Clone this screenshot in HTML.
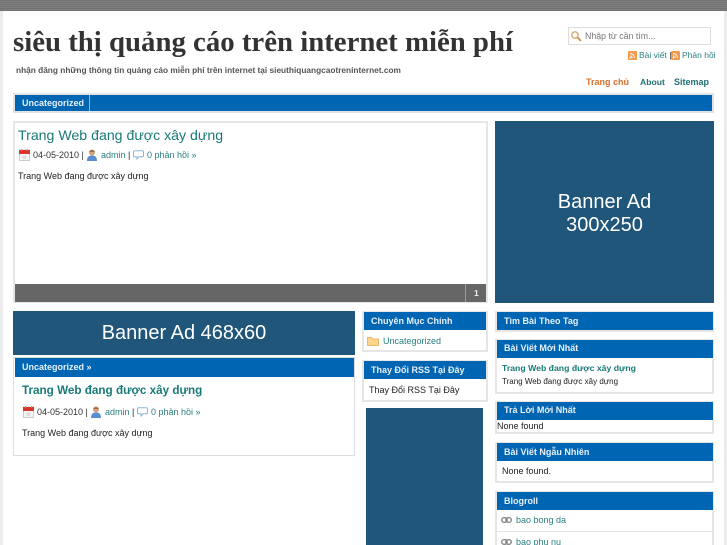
<!DOCTYPE html>
<html><head><meta charset="utf-8">
<style>
html,body{margin:0;padding:0;overflow:hidden}
body{width:727px;height:545px;position:relative;background:#fff;font-family:"Liberation Sans","Noto Sans CJK SC",sans-serif;font-size:9px;color:#222}
#w{position:absolute;left:0;top:0;width:727px;height:545px;overflow:hidden;background:#fff;filter:blur(.35px)}
.a{position:absolute;white-space:nowrap}
.box{position:absolute;box-sizing:border-box;border:2px solid #e6e6e6;background:#fff}
.hd{position:absolute;background:#0066b3;color:#e8f0f8;font-weight:bold;font-size:9px;line-height:18px;padding-left:7px;box-sizing:border-box;white-space:nowrap}
.banner{position:absolute;background:#20567a;color:#fff;text-align:center;font-size:20px}
.l{color:#2a7f80}
svg{position:absolute}
</style></head><body><div id="w">
<div class="a" style="left:0;top:0;width:727px;height:11px;background:repeating-linear-gradient(#727272 0 1px,#808080 1px 2px)"></div>
<div class="a" style="left:0;top:11px;width:3px;height:534px;background:#ececec"></div>
<div class="a" style="left:724px;top:11px;width:3px;height:534px;background:#ececec"></div>

<div class="a" style="left:13px;top:23px;font:bold 28.8px/38px 'Liberation Serif','Noto Serif CJK SC',serif;color:#333">siêu thị quảng cáo trên internet miễn phí</div>
<div class="a" style="left:16px;top:64px;font-size:8.3px;line-height:12px;font-weight:bold;color:#555">nhận đăng những thông tin quảng cáo miễn phí trên internet tại sieuthiquangcaotreninternet.com</div>

<div class="box" style="left:568px;top:27px;width:143px;height:18px;border:1px solid #ddd"></div>
<svg style="left:570px;top:30px" width="12" height="12" viewBox="0 0 12 12"><circle cx="5" cy="5" r="3.2" fill="#fff" stroke="#d9a772" stroke-width="1.4"/><path d="M7.5 7.5L11 11" stroke="#d08a45" stroke-width="1.8"/></svg>
<div class="a" style="left:585px;top:30px;font-size:8.8px;line-height:12px;color:#777">Nhập từ cần tìm...</div>

<svg style="left:628px;top:51px" width="9" height="9" viewBox="0 0 9 9"><rect width="9" height="9" rx="1" fill="#f59a4c"/><path d="M2 2.500A4.500 4.500 0 0 1 6.500 7M2 4.800A2.200 2.200 0 0 1 4.200 7" fill="none" stroke="#fff" stroke-width=".9"/><circle cx="2.400" cy="6.700" r=".8" fill="#fff"/></svg>
<div class="a l" style="left:639px;top:49px;font-size:8.5px;line-height:12px">Bài viết <span style="color:#333">|</span></div>
<svg style="left:671px;top:51px" width="9" height="9" viewBox="0 0 9 9"><rect width="9" height="9" rx="1" fill="#f59a4c"/><path d="M2 2.500A4.500 4.500 0 0 1 6.500 7M2 4.800A2.200 2.200 0 0 1 4.200 7" fill="none" stroke="#fff" stroke-width=".9"/><circle cx="2.400" cy="6.700" r=".8" fill="#fff"/></svg>
<div class="a l" style="left:682px;top:49px;font-size:8.5px;line-height:12px">Phản hồi</div>

<div class="a" style="left:586px;top:76px;font-size:9px;line-height:12px;font-weight:bold;color:#d9702a">Trang chủ</div>
<div class="a" style="left:640px;top:76px;font-size:8.600px;line-height:12px;font-weight:bold;color:#1f6f73">About</div>
<div class="a" style="left:674px;top:76px;font-size:9px;line-height:12px;font-weight:bold;color:#1f6f73">Sitemap</div>

<div class="a" style="left:13px;top:93px;width:701px;height:20px;box-sizing:border-box;border:2px solid #dfe3e6;background:#0066b3"></div>
<div class="a" style="left:22px;top:97px;font-size:9px;line-height:12px;font-weight:bold;color:#e8f0f8">Uncategorized</div>
<div class="a" style="left:89px;top:95px;width:1px;height:16px;background:#8fb8d8"></div>

<div class="box" style="left:13px;top:121px;width:475px;height:182px"></div>
<div class="a" style="left:18px;top:125px;font-size:14.15px;line-height:20px;color:#187a78">Trang Web đang được xây dựng</div>
<svg style="left:19px;top:149px" width="11" height="12" viewBox="0 0 11 12"><rect x=".5" y="1" width="10" height="10.500" fill="#f4f4f4" stroke="#ccc"/><rect x="0" y="1" width="11" height="4" fill="#d8362a"/><path d="M2.500 0v2M8.500 0v2" stroke="#999"/><rect x="3.500" y="6.500" width="4" height="3.500" fill="#ddd"/></svg>
<div class="a" style="left:33px;top:149px;font-size:9px;line-height:12px;color:#333">04-05-2010 |</div>
<svg style="left:86px;top:149px" width="12" height="12" viewBox="0 0 12 12"><circle cx="6" cy="3.500" r="3" fill="#d9a27a"/><path d="M3.200 3A3 3 0 0 1 8.800 3Z" fill="#9a6a45"/><path d="M1 12C1 7.500 3 6.500 6 6.500S11 7.500 11 12Z" fill="#5a8fd0"/></svg>
<div class="a" style="left:101px;top:149px;font-size:9px;line-height:12px"><span class="l">admin</span> |</div>
<svg style="left:133px;top:150px" width="11" height="10" viewBox="0 0 11 10"><path d="M1.500.8h8a1 1 0 0 1 1 1v4a1 1 0 0 1-1 1H6L4 9V6.800H1.500a1 1 0 0 1-1-1v-4a1 1 0 0 1 1-1Z" fill="#fff" stroke="#8ab4dc"/></svg>
<div class="a l" style="left:147px;top:149px;font-size:9px;line-height:12px">0 phản hồi »</div>
<div class="a" style="left:18px;top:170px;font-size:9px;line-height:12px;color:#222">Trang Web đang được xây dựng</div>
<div class="a" style="left:15px;top:284px;width:471px;height:18px;background:#666"></div>
<div class="a" style="left:465px;top:284px;width:1px;height:18px;background:#999"></div>
<div class="a" style="left:474px;top:287px;font-size:8.500px;line-height:12px;font-weight:bold;color:#eee">1</div>

<div class="banner" style="left:495px;top:121px;width:219px;height:182px"><div style="margin-top:70px;line-height:23px">Banner Ad<br>300x250</div></div>
<div class="banner" style="left:13px;top:311px;width:342px;height:44px;line-height:44px">Banner Ad 468x60</div>

<div class="box" style="left:13px;top:357px;width:342px;height:99px;border:1px solid #ddd"></div>
<div class="hd" style="left:15px;top:358px;width:339px;height:19px;line-height:18px">Uncategorized »</div>
<div class="a" style="left:22px;top:382px;font-size:11.700px;line-height:18px;font-weight:bold;color:#187a78">Trang Web đang được xây dựng</div>
<svg style="left:23px;top:406px" width="11" height="12" viewBox="0 0 11 12"><rect x=".5" y="1" width="10" height="10.500" fill="#f4f4f4" stroke="#ccc"/><rect x="0" y="1" width="11" height="4" fill="#d8362a"/><path d="M2.500 0v2M8.500 0v2" stroke="#999"/><rect x="3.500" y="6.500" width="4" height="3.500" fill="#ddd"/></svg>
<div class="a" style="left:37px;top:406px;font-size:9px;line-height:12px;color:#333">04-05-2010 |</div>
<svg style="left:90px;top:406px" width="12" height="12" viewBox="0 0 12 12"><circle cx="6" cy="3.500" r="3" fill="#d9a27a"/><path d="M3.200 3A3 3 0 0 1 8.800 3Z" fill="#9a6a45"/><path d="M1 12C1 7.500 3 6.500 6 6.500S11 7.500 11 12Z" fill="#5a8fd0"/></svg>
<div class="a" style="left:105px;top:406px;font-size:9px;line-height:12px"><span class="l">admin</span> |</div>
<svg style="left:137px;top:407px" width="11" height="10" viewBox="0 0 11 10"><path d="M1.500.8h8a1 1 0 0 1 1 1v4a1 1 0 0 1-1 1H6L4 9V6.800H1.500a1 1 0 0 1-1-1v-4a1 1 0 0 1 1-1Z" fill="#fff" stroke="#8ab4dc"/></svg>
<div class="a l" style="left:151px;top:406px;font-size:9px;line-height:12px">0 phản hồi »</div>
<div class="a" style="left:22px;top:427px;font-size:9px;line-height:12px;color:#222">Trang Web đang được xây dựng</div>

<div class="box" style="left:362px;top:311px;width:126px;height:41px"></div>
<div class="hd" style="left:364px;top:312px;width:122px;height:18px;padding-left:7px">Chuyên Mục Chính</div>
<svg style="left:367px;top:336px" width="12" height="10" viewBox="0 0 12 10"><path d="M.5 1.500h4l1 1.500h6v6.500H.5Z" fill="#fbd68c" stroke="#eeb76a"/></svg>
<div class="a l" style="left:383px;top:335px;font-size:9px;line-height:12px">Uncategorized</div>

<div class="box" style="left:362px;top:360px;width:126px;height:42px"></div>
<div class="hd" style="left:364px;top:361px;width:122px;height:18px;padding-left:7px">Thay Đổi RSS Tại Đây</div>
<div class="a" style="left:369px;top:384px;font-size:9px;line-height:12px;color:#222">Thay Đổi RSS Tại Đây</div>

<div class="banner" style="left:366px;top:408px;width:117px;height:137px"></div>

<div class="box" style="left:495px;top:311px;width:219px;height:21px"></div>
<div class="hd" style="left:497px;top:312px;width:216px;height:18px">Tìm Bài Theo Tag</div>

<div class="box" style="left:495px;top:339px;width:219px;height:55px"></div>
<div class="hd" style="left:497px;top:340px;width:216px;height:18px;line-height:17px">Bài Viết Mới Nhất</div>
<div class="a" style="left:502px;top:362px;font-size:8.700px;line-height:12px;font-weight:bold;color:#187a78">Trang Web đang được xây dựng</div>
<div class="a" style="left:502px;top:376px;font-size:8px;line-height:12px;color:#222">Trang Web đang được xây dựng</div>

<div class="box" style="left:495px;top:401px;width:219px;height:33px"></div>
<div class="hd" style="left:497px;top:402px;width:216px;height:18px;line-height:17px">Trả Lời Mới Nhất</div>
<div class="a" style="left:497px;top:420px;font-size:9px;line-height:12px;color:#222">None found</div>

<div class="box" style="left:495px;top:442px;width:219px;height:41px"></div>
<div class="hd" style="left:497px;top:443px;width:216px;height:18px">Bài Viết Ngẫu Nhiên</div>
<div class="a" style="left:502px;top:465px;font-size:9px;line-height:12px;color:#222">None found.</div>

<div class="box" style="left:495px;top:491px;width:219px;height:80px"></div>
<div class="hd" style="left:497px;top:492px;width:216px;height:18px">Blogroll</div>
<svg style="left:501px;top:517px" width="11" height="6" viewBox="0 0 11 6"><rect x=".7" y=".7" width="5.500" height="4.600" rx="2.300" fill="none" stroke="#888" stroke-width="1.400"/><rect x="4.800" y=".7" width="5.500" height="4.600" rx="2.300" fill="none" stroke="#888" stroke-width="1.400"/></svg>
<div class="a l" style="left:516px;top:514px;font-size:9px;line-height:12px">bao bong da</div>
<div class="a" style="left:497px;top:531px;width:215px;height:1px;background:#e2e2e2"></div>
<svg style="left:501px;top:539px" width="11" height="6" viewBox="0 0 11 6"><rect x=".7" y=".7" width="5.500" height="4.600" rx="2.300" fill="none" stroke="#888" stroke-width="1.400"/><rect x="4.800" y=".7" width="5.500" height="4.600" rx="2.300" fill="none" stroke="#888" stroke-width="1.400"/></svg>
<div class="a l" style="left:516px;top:536px;font-size:9px;line-height:12px">bao phu nu</div>
</div></body></html>
